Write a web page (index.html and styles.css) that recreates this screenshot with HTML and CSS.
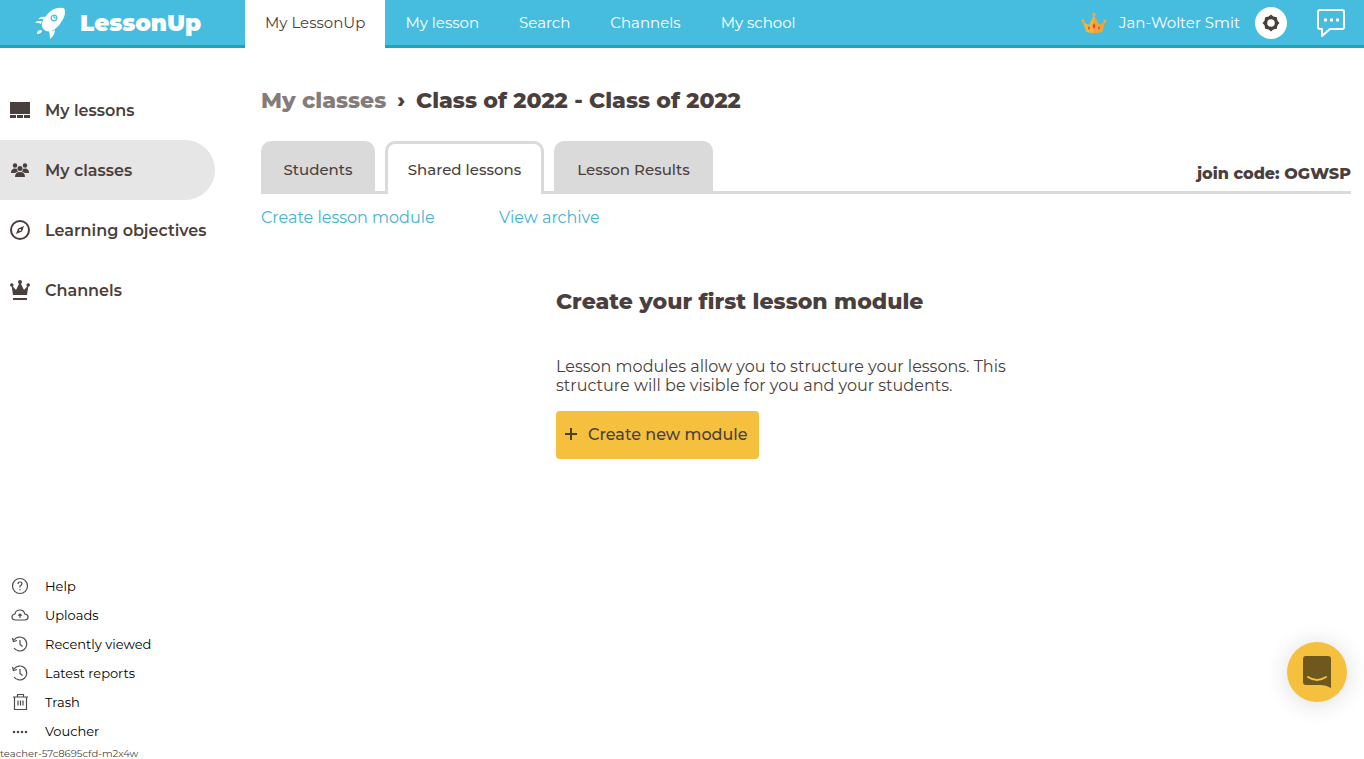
FILE: index.html
```html
<!DOCTYPE html>
<html lang="en">
<head>
  <meta charset="UTF-8" />
  <meta name="viewport" content="width=device-width, initial-scale=1.0" />
  <title>LessonUp</title>
  <link rel="stylesheet" href="styles.css">
</head>
<body>
  <header class="topbar">
    <a class="logo" href="#">
      <svg width="32" height="32" viewBox="0 0 32 32" fill="#fff" aria-hidden="true">
        <path d="M8 17C8 13 14 5 20 2q5-2 10-1 2 4 0 9c-3 7-8 12-12 14-5 2-11-2-10-7z"/>
        <path d="M12 10Q7 9 4 12q4-1 7 1zM8 14q-5-1-7 2 3-1 6 1zM15 24q3 1 6-1 0 5-5 9 0-4-1-8zM4 24q3-2 4 0-1 3-5 3 0-2 1-3z"/>
        <circle cx="20" cy="11" r="2.800" fill="#fff" stroke="#46bddf" stroke-width="1.200"/>
        <path d="M20 9v2h2" fill="none" stroke="#46bddf"/>
      </svg>
      <span>LessonUp</span>
    </a>
    <nav class="topnav">
      <a class="active" href="#">My LessonUp</a>
      <a href="#">My lesson</a>
      <a href="#">Search</a>
      <a href="#">Channels</a>
      <a href="#">My school</a>
    </nav>
    <div class="account">
      <svg width="26" height="22" viewBox="0 0 26 22" aria-hidden="true">
        <path d="M5 20 2 10l6 3 5-10 5 10 6-3-3 10q-8 2-16 0z" fill="#f5b23c"/>
        <path d="M13 3l5 10 6-3-3 10q-4 1-8 1z" fill="#eda53b"/>
        <circle cx="2" cy="9" r="1.700" fill="#f2a83b"/><circle cx="13" cy="2.500" r="1.800" fill="#f2a83b"/><circle cx="24" cy="9" r="1.700" fill="#f2a83b"/>
        <path d="M13 11l1.500 3-1.500 3-1.500-3zM8 14l1 2-1 2-1-2zM18 14l1 2-1 2-1-2z" fill="#dc4a2c"/>
      </svg>
      <a class="user" href="#">Jan-Wolter Smit</a>
      <button class="settings" type="button" aria-label="Settings">
        <svg width="18" height="18" viewBox="0 0 18 18">
          <path d="M9 .5l2.300 2 3.500.700.700 3.500L17.500 9l-2 2.300-.700 3.500-3.500.700L9 17.500l-2.300-2-3.500-.700-.700-3.500L.5 9l2-2.300.700-3.500 3.500-.700z" fill="#4b3f3d"/>
          <circle cx="9" cy="9" r="3.800" fill="#fff"/>
        </svg>
      </button>
      <button class="chat" type="button" aria-label="Messages">
        <svg width="30" height="30" viewBox="0 0 30 30" fill="none" stroke="#fff" stroke-width="2" stroke-linejoin="round">
          <path d="M4 2h22q2 0 2 2v15q0 2-2 2H14l-8 7v-7H4q-2 0-2-2V4q0-2 2-2z"/>
          <path d="M8 12h3M14 12h3M20 12h3" stroke-width="3"/>
        </svg>
      </button>
    </div>
  </header>

  <div class="page">
    <aside class="sidebar">
      <nav class="main-menu">
        <a href="#">
          <svg width="20" height="20" viewBox="0 0 20 20" fill="#4b3f3d"><path d="M0 2h20v12H0zM0 15h6v3H0zM7 15h6v3H7zM14 15h6v3h-6z"/></svg>
          My lessons
        </a>
        <a class="active" href="#">
          <svg width="20" height="20" viewBox="0 0 20 20" fill="#4b3f3d">
            <circle cx="5" cy="5.500" r="2.200"/><circle cx="15" cy="5.500" r="2.200"/><circle cx="10" cy="8.500" r="2.500"/>
            <path d="M1 13q0-4.500 4-4.500 1.500 0 2.200.600Q7 11 8 12q-2 0-3 1zM19 13q0-4.500-4-4.500-1.500 0-2.200.600Q13 11 12 12q2 0 3 1zM5 17q0-5 5-5t5 5z"/>
          </svg>
          My classes
        </a>
        <a href="#">
          <svg width="20" height="20" viewBox="0 0 20 20" fill="#4b3f3d">
            <circle cx="10" cy="10" r="9" fill="none" stroke="#4b3f3d" stroke-width="2"/>
            <path fill-rule="evenodd" d="M14 6l-2 5.500L6 14l2-5.500zM10 9a1 1 0 1 0 .1 2 1 1 0 0 0-.1-2z"/>
          </svg>
          Learning objectives
        </a>
        <a href="#">
          <svg width="20" height="20" viewBox="0 0 20 20" fill="#4b3f3d">
            <path d="M3 15 1.500 5 6 10 10 2l4 8 4.500-5L17 15zM3 18h14v2H3z"/>
            <circle cx="1.800" cy="5" r="1.800"/><circle cx="10" cy="2" r="2"/><circle cx="18.200" cy="5" r="1.800"/>
          </svg>
          Channels
        </a>
      </nav>

      <div class="bottom">
        <nav class="sub-menu">
          <a href="#">
            <svg width="18" height="18" viewBox="0 0 18 18"><circle cx="9" cy="9" r="7.500"/><path d="M7 7q0-2 2-2t2 1.800Q11 8 9 9v1.500M9 12v1.200"/></svg>
            Help
          </a>
          <a href="#">
            <svg width="18" height="18" viewBox="0 0 18 18"><path d="M5 14q-4 0-4-3 0-2.500 3-3 .5-4 5-4 4 0 4.700 4 3.300.3 3.300 3t-3 3zM9 12V8M7.200 9.600 9 8l1.800 1.600"/></svg>
            Uploads
          </a>
          <a href="#">
            <svg width="18" height="18" viewBox="0 0 18 18"><path d="M3 5a7 7 0 1 1 0 8M1.500 3l1 3.500L6 5.500M9 5v4.500l2.500 2"/></svg>
            Recently viewed
          </a>
          <a href="#">
            <svg width="18" height="18" viewBox="0 0 18 18"><path d="M3 5a7 7 0 1 1 0 8M1.500 3l1 3.500L6 5.500M9 5v4.500l2.500 2"/></svg>
            Latest reports
          </a>
          <a href="#">
            <svg width="18" height="18" viewBox="0 0 18 18"><path d="M2 4h15M3.500 4v12.500h12V4M6.500 4V1.500h6V4M7 7.500v5M9.500 7.500v5M12 7.500v5"/></svg>
            Trash
          </a>
          <a href="#">
            <svg class="dots" width="18" height="18" viewBox="0 0 18 18"><circle cx="3" cy="10" r="1.300"/><circle cx="7" cy="10" r="1.300"/><circle cx="11" cy="10" r="1.300"/><circle cx="15" cy="10" r="1.300"/></svg>
            Voucher
          </a>
        </nav>
        <div class="host">teacher-57c8695cfd-m2x4w</div>
      </div>
    </aside>

    <main class="content">
      <h1 class="breadcrumb">
        <a href="#">My classes</a>
        <span class="arrow">›</span>
        <span>Class of 2022 - Class of 2022</span>
      </h1>

      <div class="tabs">
        <button class="tab" type="button">Students</button>
        <button class="tab wide active" type="button">Shared lessons</button>
        <button class="tab wide" type="button">Lesson Results</button>
        <div class="join-code">join code: OGWSP</div>
      </div>

      <div class="actions">
        <a href="#">Create lesson module</a>
        <a href="#">View archive</a>
      </div>

      <section class="empty">
        <h2>Create your first lesson module</h2>
        <p>Lesson modules allow you to structure your lessons. This structure will be visible for you and your students.</p>
        <button class="create" type="button">
          <svg width="14" height="14" viewBox="0 0 14 14" fill="none" stroke="#4b3f20" stroke-width="2"><path d="M7 1v12M1 7h12"/></svg>
          Create new module
        </button>
      </section>
    </main>
  </div>

  <button class="messenger" type="button" aria-label="Open chat">
    <svg width="28" height="32" viewBox="0 0 28 32">
      <path d="M3 0h22q3 0 3 3v29q-5-3-10-3H3q-3 0-3-3V3q0-3 3-3z" fill="#6f581e"/>
      <path d="M5 21q9 6 18 0" fill="none" stroke="#f5c03e" stroke-width="2" stroke-linecap="round"/>
    </svg>
  </button>
</body>
</html>
```
FILE: styles.css
```css
* {
  box-sizing: border-box;
}

body {
  margin: 0;
  min-height: 100vh;
  display: flex;
  flex-direction: column;
  background: #fff;
  color: #4b3f3d;
  font-family: Montserrat, Inter, sans-serif;
  font-size: 16px;
}

a {
  color: inherit;
  text-decoration: none;
}

button {
  font: inherit;
  color: inherit;
  border: none;
  padding: 0;
  cursor: pointer;
}

svg {
  flex: none;
  display: block;
}

/* Top bar */
.topbar {
  display: flex;
  height: 48px;
  background: #46bddf;
  color: #fff;
  box-shadow: inset 0 -3px #1aa7b4;
}

.logo {
  width: 245px;
  padding: 0 0 2px 34px;
  display: flex;
  align-items: center;
  gap: 14px;
  font-size: 23px;
  font-weight: 900;
}

.topnav {
  display: flex;
  font-size: 15px;
}

.topnav a {
  padding: 0 20px 4px;
  display: flex;
  align-items: center;
}

.topnav .active {
  background: #fff;
  color: #4b3f3d;
}

.account {
  margin-left: auto;
  padding: 0 18px 2px 0;
  display: flex;
  align-items: center;
}

.user {
  margin: 0 15px 0 12px;
  padding-bottom: 2px;
  font-size: 15px;
}

.settings {
  width: 32px;
  height: 32px;
  border-radius: 50%;
  background: #fff;
  display: grid;
  place-items: center;
}

.chat {
  margin-left: 29px;
  background: none;
}

/* Sidebar */
.page {
  flex: 1;
  display: flex;
}

.sidebar {
  width: 245px;
  flex: none;
  padding-top: 32px;
  display: flex;
  flex-direction: column;
  justify-content: space-between;
}

.main-menu a {
  width: 215px;
  height: 60px;
  padding-left: 10px;
  display: flex;
  align-items: center;
  gap: 15px;
  font-weight: 600;
  white-space: nowrap;
}

.main-menu .active {
  background: #e6e6e6;
  border-radius: 0 30px 30px 0;
}

.sub-menu a {
  height: 29px;
  padding-left: 11px;
  display: flex;
  align-items: center;
  gap: 16px;
  color: #000;
  font-size: 13px;
}

.sub-menu svg {
  fill: none;
  stroke: #4b4b4b;
  stroke-width: 1.2;
}

.sub-menu .dots {
  fill: #4b4b4b;
  stroke: none;
}

.host {
  padding-top: 4px;
  font-size: 10px;
  line-height: 10px;
}

/* Content */
.content {
  flex: 1;
  padding: 39px 13px 0 16px;
}

.breadcrumb {
  height: 26px;
  margin: 0 0 28px;
  display: flex;
  align-items: center;
  font-size: 22px;
  font-weight: 800;
}

.breadcrumb a {
  color: #857b79;
}

.arrow {
  margin: 0 11px;
}

.tabs {
  display: flex;
  gap: 10px;
  height: 53px;
  box-shadow: inset 0 -3px #dadada;
}

.tab {
  width: 114px;
  padding-top: 3px;
  border-radius: 10px 10px 0 0;
  background: #dadada;
  font-size: 15px;
  font-weight: 500;
}

.tab.wide {
  width: 159px;
}

.tab.active {
  padding-top: 0;
  background: #fff;
  border: 3px solid #dadada;
  border-bottom: none;
}

.join-code {
  margin-left: auto;
  padding-top: 23px;
  font-size: 16px;
  font-weight: 800;
}

.actions {
  display: flex;
  padding-top: 14px;
  color: #3fb5d5;
}

.actions a {
  width: 238px;
}

.empty {
  max-width: 500px;
  margin: 60px auto 0;
}

.empty h2 {
  margin: 0 0 40px;
  font-size: 22px;
  line-height: 30px;
  font-weight: 800;
}

.empty p {
  margin: 0 0 16px;
  line-height: 19px;
}

.create {
  width: 203px;
  height: 48px;
  padding: 0 0 2px 8px;
  display: flex;
  align-items: center;
  gap: 10px;
  border-radius: 4px;
  background: #f5c03e;
  font-weight: 500;
  white-space: nowrap;
}

/* Floating chat button */
.messenger {
  position: fixed;
  right: 17px;
  bottom: 57px;
  width: 60px;
  height: 60px;
  border-radius: 50%;
  display: grid;
  place-items: center;
  background: #f5c03e;
  box-shadow: 0 2px 24px rgba(0, 0, 0, 0.14);
}
```
